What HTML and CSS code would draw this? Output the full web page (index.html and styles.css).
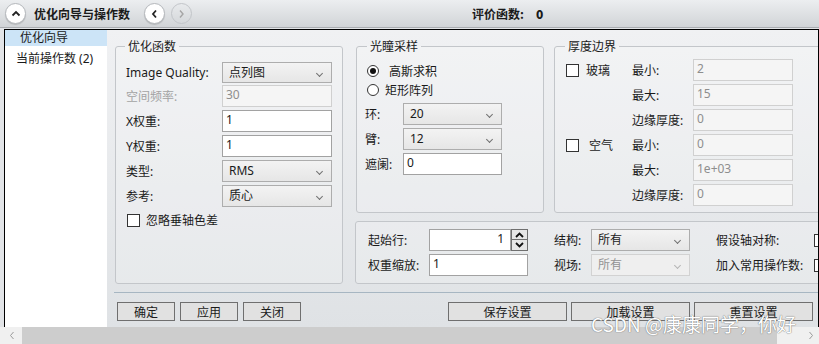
FILE: index.html
```html
<!DOCTYPE html>
<html>
	<head>
		<meta charset="UTF-8">
		<title>优化向导与操作数</title>
		<link rel="stylesheet" href="styles.css">
	</head>
	<body>
		<div class="window">
			<div class="topbar">
				<span class="round_btn collapse">
					<svg width="10" height="7" viewBox="0 0 10 7"><path d="M1.5 5.5 L5 2 L8.5 5.5" fill="none" stroke="#222" stroke-width="1.8"/></svg>
				</span>
				<span class="bar_title">优化向导与操作数</span>
				<span class="round_btn nav_back">
					<svg width="7" height="10" viewBox="0 0 7 10"><path d="M5 1.5 L2 5 L5 8.5" fill="none" stroke="#222" stroke-width="1.8"/></svg>
				</span>
				<span class="round_btn nav_fwd">
					<svg width="7" height="10" viewBox="0 0 7 10"><path d="M2 1.5 L5 5 L2 8.5" fill="none" stroke="#a5a5a5" stroke-width="1.4"/></svg>
				</span>
				<span class="merit">评价函数:<b>0</b></span>
			</div>
			<div class="frame">
				<div class="sidebar">
					<div class="nav_item active">优化向导</div>
					<div class="nav_item">当前操作数 (2)</div>
				</div>
				<div class="main">
					<div class="groups">
						<fieldset class="group g_func">
							<legend>优化函数</legend>
							<div class="form_grid">
								<label>Image Quality:</label>
								<div class="combo">点列图<i class="arrow"></i></div>
								<label class="off">空间频率:</label>
								<div class="field off">30</div>
								<label>X权重:</label>
								<div class="field">1</div>
								<label>Y权重:</label>
								<div class="field">1</div>
								<label>类型:</label>
								<div class="combo">RMS<i class="arrow"></i></div>
								<label>参考:</label>
								<div class="combo">质心<i class="arrow"></i></div>
							</div>
							<div class="check_row"><span class="check"></span>忽略垂轴色差</div>
						</fieldset>
						<div class="right_col">
							<div class="right_top">
								<fieldset class="group g_pupil">
									<legend>光瞳采样</legend>
									<div class="radio_row first"><span class="radio on"></span>高斯求积</div>
									<div class="radio_row"><span class="radio"></span>矩形阵列</div>
									<div class="pupil_grid">
										<label>环:</label>
										<div class="combo">20<i class="arrow"></i></div>
										<label>臂:</label>
										<div class="combo">12<i class="arrow"></i></div>
										<label>遮阑:</label>
										<div class="field">0</div>
									</div>
								</fieldset>
								<fieldset class="group g_thick">
									<legend>厚度边界</legend>
									<div class="thick_grid">
										<div class="check_cell"><span class="check"></span>玻璃</div>
										<label>最小:</label>
										<div class="field off">2</div>
										<span></span>
										<label>最大:</label>
										<div class="field off">15</div>
										<span></span>
										<label>边缘厚度:</label>
										<div class="field off">0</div>
										<div class="check_cell air"><span class="check"></span>空气</div>
										<label>最小:</label>
										<div class="field off">0</div>
										<span></span>
										<label>最大:</label>
										<div class="field off">1e+03</div>
										<span></span>
										<label>边缘厚度:</label>
										<div class="field off">0</div>
									</div>
								</fieldset>
							</div>
							<fieldset class="group g_misc">
								<div class="misc_grid">
									<label>起始行:</label>
									<div class="spin">
										<div class="field num">1</div>
										<div class="spin_btns">
											<span><svg width="9" height="6" viewBox="0 0 9 6"><path d="M1 5 L4.5 1.5 L8 5" fill="none" stroke="#111" stroke-width="1.8"/></svg></span>
											<span><svg width="9" height="6" viewBox="0 0 9 6"><path d="M1 1 L4.5 4.5 L8 1" fill="none" stroke="#111" stroke-width="1.8"/></svg></span>
										</div>
									</div>
									<label class="pad">结构:</label>
									<div class="combo">所有<i class="arrow"></i></div>
									<label class="pad">假设轴对称:</label>
									<span class="check"></span>
									<label>权重缩放:</label>
									<div class="field">1</div>
									<label class="pad">视场:</label>
									<div class="combo off">所有<i class="arrow"></i></div>
									<label class="pad">加入常用操作数:</label>
									<span class="check"></span>
								</div>
							</fieldset>
						</div>
					</div>
					<div class="btn_bar">
						<div class="btn_group">
							<button class="btn">确定</button>
							<button class="btn">应用</button>
							<button class="btn">关闭</button>
						</div>
						<div class="btn_group right">
							<button class="btn wide">保存设置</button>
							<button class="btn wide">加载设置</button>
							<button class="btn wide">重置设置</button>
						</div>
					</div>
				</div>
			</div>
			<div class="hscroll">
				<span class="sb_arrow">
					<svg width="6" height="9" viewBox="0 0 6 9"><path d="M4.5 1 L1.5 4.5 L4.5 8" fill="none" stroke="#9a9a9a" stroke-width="1"/></svg>
				</span>
				<span class="sb_thumb"></span>
				<span class="sb_arrow end">
					<svg width="6" height="9" viewBox="0 0 6 9"><path d="M1.5 1 L4.5 4.5 L1.5 8" fill="none" stroke="#9a9a9a" stroke-width="1"/></svg>
				</span>
			</div>
			<div class="watermark">CSDN @康康同学，你好</div>
		</div>
	</body>
</html>
```

FILE: styles.css
```css
*{
	padding: 0;
	margin: 0;
	box-sizing: border-box;
}
body{
	font-family: "Noto Sans", "Noto Sans CJK SC", sans-serif;
	font-size: 12px;
	color: #1a1a1a;
}
.window{
	position: relative;
	width: 819px;
	height: 344px;
	overflow: hidden;
	background: #e2e4e7;
}
.topbar{
	height: 28px;
	display: flex;
	align-items: center;
	padding-left: 5px;
	background: linear-gradient(#eceef0, #d1d4d7);
	border-bottom: 1px solid #a9acb0;
}
.round_btn{
	width: 21px;
	height: 21px;
	border-radius: 50%;
	display: flex;
	align-items: center;
	justify-content: center;
	background: #fff;
	border: 1px solid #b5b8bc;
	box-shadow: 0 1px 1px rgba(0,0,0,0.15);
}
.round_btn.nav_fwd{
	background: transparent;
	border-color: #c2c5c9;
	box-shadow: none;
	margin-left: 6px;
}
.round_btn.nav_back{
	margin-left: 14px;
}
.bar_title{
	margin-left: 8px;
	font-weight: bold;
	font-family: "Noto Sans CJK SC", sans-serif;
	font-size: 12px;
}
.merit{
	margin-left: 280px;
	font-weight: bold;
	font-family: "Noto Sans CJK SC", sans-serif;
}
.merit b{
	margin-left: 12px;
}
.frame{
	margin: 1px 0 0 4px;
	height: 298px;
	border: 1px solid #000;
	border-bottom: none;
	display: flex;
	background: #fff;
}
.sidebar{
	width: 102px;
	flex-shrink: 0;
	background: #fff;
}
.nav_item{
	height: 16px;
	line-height: 16px;
	padding-left: 11px;
	white-space: nowrap;
}
.nav_item.active{
	padding-left: 15px;
	background: #cce4f7;
}
.nav_item + .nav_item{
	margin-top: 5px;
}
.main{
	flex: 1;
	overflow: hidden;
	padding-top: 8px;
	background: linear-gradient(#f0f1f3, #dfe2e5);
	display: flex;
	flex-direction: column;
}
.groups{
	display: flex;
	padding-left: 8px;
	height: 246px;
}
.group{
	border: 1px solid #c3c6ca;
	border-radius: 3px;
	background: rgba(255,255,255,0.2);
}
.group legend{
	padding: 0 3px;
	line-height: 16px;
	font-family: "Noto Sans CJK SC", sans-serif;
}
.g_func{
	width: 227px;
	height: 246px;
	flex-shrink: 0;
	padding: 8px 10px 0 10px;
}
.g_func legend{
	margin-left: -1px;
}
.form_grid{
	display: grid;
	grid-template-columns: 96px 110px;
	grid-template-rows: 20px 22px 22px 22px 22px 22px;
	row-gap: 3px;
	align-items: center;
}
.form_grid > :nth-child(2){
	align-self: start;
	height: 21px;
}
label{
	white-space: nowrap;
}
label.off{
	color: #a3a3a3;
}
.field{
	height: 22px;
	border: 1px solid #a2a2a2;
	background: #fff;
	padding: 0 3px;
	line-height: 17px;
}
.field.off{
	border-color: #d0d0d0;
	background: #f5f5f5;
	color: #8e8e8e;
}
.field.num{
	text-align: right;
	padding-right: 6px;
}
.combo{
	position: relative;
	height: 22px;
	border: 1px solid #adadad;
	background: linear-gradient(#f3f3f3, #e6e6e6);
	padding: 0 6px;
	line-height: 19px;
}
.combo.off{
	border-color: #d2d2d2;
	background: #efefef;
	color: #939393;
}
.combo .arrow{
	position: absolute;
	right: 9px;
	top: 8px;
	width: 5px;
	height: 5px;
	border-right: 1px solid #707070;
	border-bottom: 1px solid #707070;
	transform: rotate(45deg);
}
.combo.off .arrow{
	border-color: #b5b5b5;
}
.check{
	display: inline-block;
	width: 13px;
	height: 13px;
	border: 1px solid #333;
	background: #fff;
	flex-shrink: 0;
}
.check_row{
	margin-top: 6px;
	display: flex;
	align-items: center;
	height: 14px;
	padding-left: 1px;
}
.check_row .check{
	margin-right: 6px;
}
.right_col{
	margin-left: 12px;
	display: flex;
	flex-direction: column;
	width: 480px;
	flex-shrink: 0;
}
.right_top{
	display: flex;
	height: 175px;
}
.g_pupil{
	width: 188px;
	height: 175px;
	margin-left: 1px;
	padding: 7px 0 0 8px;
	flex-shrink: 0;
}
.g_pupil legend{
	margin-left: 2px;
}
.radio_row{
	height: 19px;
	display: flex;
	align-items: center;
	padding-left: 2px;
}
.radio{
	width: 12px;
	height: 12px;
	border-radius: 50%;
	border: 1px solid #333;
	background: #fff;
	margin-right: 6px;
	position: relative;
}
.radio_row.first .radio{
	margin-right: 10px;
}
.radio.on::after{
	content: "";
	position: absolute;
	left: 2px;
	top: 2px;
	width: 6px;
	height: 6px;
	border-radius: 50%;
	background: #111;
}
.pupil_grid{
	margin-top: 4px;
	display: grid;
	grid-template-columns: 38px 99px;
	grid-auto-rows: 22px;
	row-gap: 3px;
	align-items: center;
}
.g_thick{
	width: 280px;
	height: 175px;
	margin-left: 10px;
	padding: 5px 0 0 11px;
	flex-shrink: 0;
}
.g_thick legend{
	margin-left: -1px;
}
.thick_grid{
	display: grid;
	grid-template-columns: 66px 61px 100px;
	grid-auto-rows: 22px;
	row-gap: 3px;
	align-items: center;
}
.check_cell{
	display: flex;
	align-items: center;
}
.check_cell .check{
	margin-right: 7px;
}
.check_cell.air .check{
	margin-right: 10px;
}
.g_misc{
	margin-top: 8px;
	height: 63px;
	padding: 7px 0 0 12px;
}
.misc_grid{
	display: grid;
	grid-template-columns: 61px 99px 63px 99px 124px 13px;
	grid-auto-rows: 22px;
	row-gap: 3px;
	align-items: center;
}
.misc_grid label.pad{
	padding-left: 26px;
}
.spin{
	display: flex;
	height: 22px;
}
.spin .field{
	flex: 1;
}
.spin_btns{
	width: 17px;
	display: flex;
	flex-direction: column;
}
.spin_btns span{
	height: 11px;
	border: 1px solid #6f6f6f;
	background: #e6e6e6;
	display: flex;
	align-items: center;
	justify-content: center;
}
.spin_btns span + span{
	border-top: none;
}
.btn_bar{
	margin: 8px 0 0 7px;
	border-top: 1px solid #a7b6c2;
	padding: 9px 5px 0 3px;
	display: flex;
	justify-content: space-between;
}
.btn_group{
	display: flex;
	gap: 5px;
}
.btn_group.right{
	gap: 4px;
}
.btn{
	width: 58px;
	height: 19px;
	border: 1px solid #6f6f6f;
	background: #e1e1e1;
	font-family: "Noto Sans CJK SC", sans-serif;
	font-size: 12px;
	line-height: 15px;
	color: #1a1a1a;
}
.btn.wide{
	width: 119px;
}
.hscroll{
	height: 17px;
	display: flex;
	background: #f0f0f0;
}
.sb_arrow{
	width: 22px;
	display: flex;
	align-items: center;
	padding-left: 9px;
}
.sb_arrow.end{
	width: 42px;
	padding-left: 31px;
}
.sb_thumb{
	flex: 1;
	background: #cdcdcd;
}
.watermark{
	position: absolute;
	left: 591px;
	top: 310px;
	font-family: "Noto Sans CJK SC", sans-serif;
	font-size: 19px;
	color: #fff;
	text-shadow: 0 0 1px #777, 0 0 1px #777;
	white-space: nowrap;
}
```
